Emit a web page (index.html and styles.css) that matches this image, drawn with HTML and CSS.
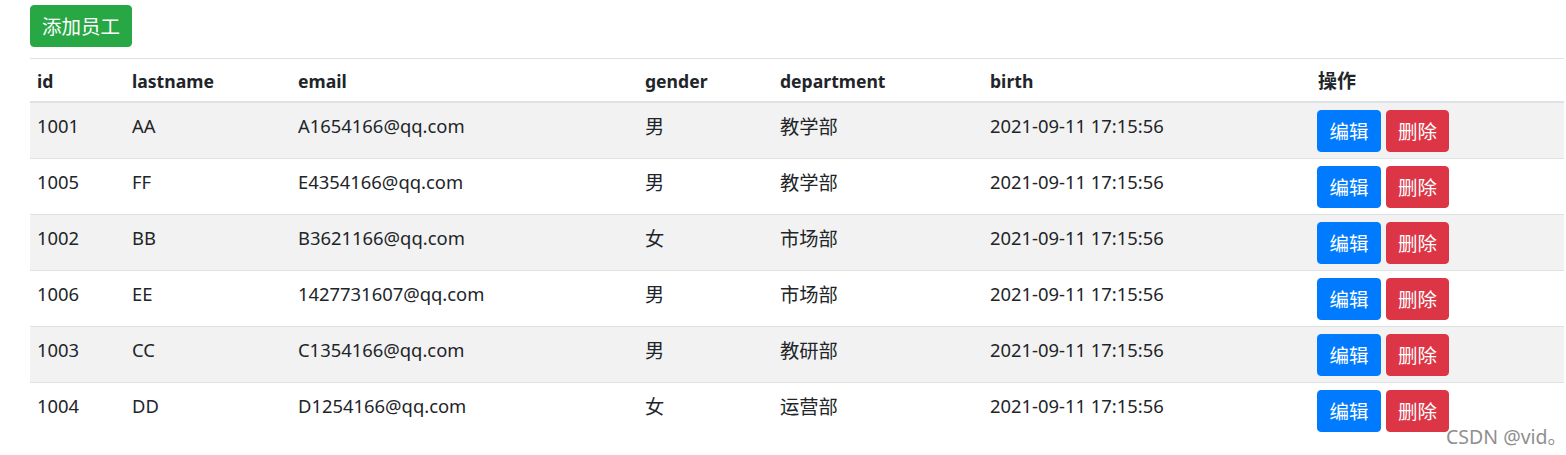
FILE: index.html
```html
<!DOCTYPE html>
<html lang="zh-CN">
<head>
<meta charset="utf-8">
<title>员工列表</title>
<link rel="stylesheet" href="styles.css">
</head>
<body>
<main class="page">
  <div class="toolbar">
    <button class="btn btn-success">添加员工</button>
  </div>
  <table class="table">
    <colgroup>
      <col class="c-id"><col class="c-name"><col class="c-email"><col class="c-gender"><col class="c-dept"><col class="c-birth"><col class="c-op">
    </colgroup>
    <thead>
      <tr><th>id</th><th>lastname</th><th>email</th><th>gender</th><th>department</th><th>birth</th><th class="zh">操作</th></tr>
    </thead>
    <tbody>
      <tr><td>1001</td><td>AA</td><td>A1654166@qq.com</td><td class="zh">男</td><td class="zh">教学部</td><td>2021-09-11 17:15:56</td><td class="ops"><button class="btn btn-primary">编辑</button><button class="btn btn-danger">删除</button></td></tr>
      <tr><td>1005</td><td>FF</td><td>E4354166@qq.com</td><td class="zh">男</td><td class="zh">教学部</td><td>2021-09-11 17:15:56</td><td class="ops"><button class="btn btn-primary">编辑</button><button class="btn btn-danger">删除</button></td></tr>
      <tr><td>1002</td><td>BB</td><td>B3621166@qq.com</td><td class="zh">女</td><td class="zh">市场部</td><td>2021-09-11 17:15:56</td><td class="ops"><button class="btn btn-primary">编辑</button><button class="btn btn-danger">删除</button></td></tr>
      <tr><td>1006</td><td>EE</td><td>1427731607@qq.com</td><td class="zh">男</td><td class="zh">市场部</td><td>2021-09-11 17:15:56</td><td class="ops"><button class="btn btn-primary">编辑</button><button class="btn btn-danger">删除</button></td></tr>
      <tr><td>1003</td><td>CC</td><td>C1354166@qq.com</td><td class="zh">男</td><td class="zh">教研部</td><td>2021-09-11 17:15:56</td><td class="ops"><button class="btn btn-primary">编辑</button><button class="btn btn-danger">删除</button></td></tr>
      <tr><td>1004</td><td>DD</td><td>D1254166@qq.com</td><td class="zh">女</td><td class="zh">运营部</td><td>2021-09-11 17:15:56</td><td class="ops"><button class="btn btn-primary">编辑</button><button class="btn btn-danger">删除</button></td></tr>
    </tbody>
  </table>
  <div class="watermark">CSDN @vid。</div>
</main>
</body>
</html>
```
FILE: styles.css
```css
* { box-sizing: border-box; }
html, body { margin: 0; padding: 0; background: #fff; }
body {
  font-family: "Noto Sans", "Noto Sans CJK SC", sans-serif;
  font-size: 18.4px;
  line-height: 26px;
  color: #212529;
}
.page {
  position: relative;
  padding: 5px 2px 0 30px;
  height: 455px;
  overflow: hidden;
}
.toolbar { height: 53px; }
.btn {
  display: inline-block;
  font-family: "Noto Sans CJK SC", sans-serif;
  font-size: 19.5px;
  line-height: 26px;
  height: 42px;
  padding: 7px 0;
  border: 1px solid transparent;
  border-radius: 4px;
  color: #fff;
  text-align: center;
  cursor: pointer;
}
.btn-success { background: #28a745; border-color: #28a745; width: 102px; }
.btn-primary { background: #007bff; border-color: #007bff; width: 64px; }
.btn-danger { background: #dc3545; border-color: #dc3545; width: 63px; margin-left: 5px; }
.table {
  width: 1534px;
  border-collapse: collapse;
  table-layout: fixed;
}
.c-id { width: 95px; }
.c-name { width: 166px; }
.c-email { width: 347px; }
.c-gender { width: 135px; }
.c-dept { width: 210px; }
.c-birth { width: 328px; }
.c-op { width: 253px; }
.table th, .table td {
  text-align: left;
  vertical-align: top;
  padding: 7px 7px;
  border-top: 1px solid #dee2e6;
  white-space: nowrap;
}
.table th {
  font-weight: 700;
  font-size: 17.6px;
  height: 42px;
  padding-top: 9px;
  border-bottom: 2px solid #dee2e6;
}
.table td { height: 56px; padding-top: 10px; padding-bottom: 6px; }
.table .zh { font-family: "Noto Sans CJK SC", sans-serif; font-size: 19.3px; }
.table th.zh { font-size: 19px; padding-top: 8px; }
.table td.ops { padding-top: 7px; padding-bottom: 6px; padding-left: 6px; }
.table tbody tr:nth-child(odd) { background: #f2f2f2; }
.watermark {
  position: absolute;
  left: 1446px;
  top: 424px;
  font-size: 19.5px;
  line-height: 26px;
  white-space: nowrap;
  color: #8f8f8f;
  font-family: "Noto Sans", "Noto Sans CJK SC", sans-serif;
}
```
